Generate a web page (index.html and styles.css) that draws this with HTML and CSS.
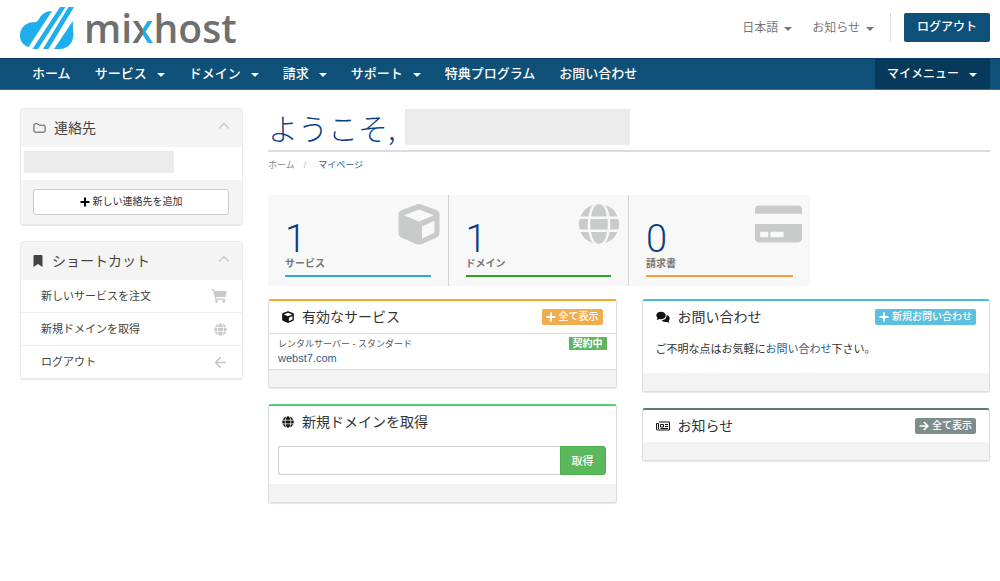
FILE: index.html
```
<!DOCTYPE html>
<html lang="ja">
<head>
<meta charset="utf-8">
<title>マイページ - mixhost</title>
<meta name="viewport" content="width=device-width, initial-scale=1">
<link rel="stylesheet" href="styles.css">
</head>
<body>
<svg class="sprite" aria-hidden="true">
  <symbol id="cube" viewBox="0 0 42 42">
    <path fill-rule="evenodd" d="M21 1Q22.500 1 24 1.700L38.500 7Q41.500 8.200 41.500 11.500V30Q41.500 33 38.800 34.400L24 41Q21 42 18 41L3.200 34.400Q.5 33 .5 30V11.500Q.5 8.200 3.500 7L18 1.700Q19.500 1 21 1ZM21 6.500L6 12.200L21 18.500L36 12.200ZM24 23.500V35.500L36.500 29.700V17.800Z"/>
  </symbol>
  <symbol id="globe" viewBox="0 0 42 42">
    <path d="M13 13.500Q15 1 21 1T29 13.500ZM12.500 16H29.500Q30.200 21 29.500 26.500H12.500Q11.800 21 12.500 16ZM13 29H29Q27 41 21 41T13 29ZM10.500 13.500H2.500Q6 4.500 15 2Q11.500 6 10.500 13.500ZM10 16Q9.400 21 10 26.500H1.800Q0 21 1.800 16ZM10.500 29Q11.500 36 15 40Q6 37.500 2.500 29ZM31.500 13.500H39.500Q36 4.500 27 2Q30.500 6 31.500 13.500ZM32 16Q32.600 21 32 26.500H40.200Q42 21 40.200 16ZM31.500 29Q30.500 36 27 40Q36 37.500 39.500 29Z"/>
  </symbol>
  <symbol id="card" viewBox="0 0 46 36">
    <path fill-rule="evenodd" d="M0 8V4Q0 0 4 0H42Q46 0 46 4V8ZM0 18H46V32Q46 36 42 36H4Q0 36 0 32ZM6 25.500Q5 25.500 5 26.500V30Q5 31 6 31H12Q13 31 13 30V26.500Q13 25.500 12 25.500ZM16 25.500Q15 25.500 15 26.500V30Q15 31 16 31H27Q28 31 28 30V26.500Q28 25.500 27 25.500Z"/>
  </symbol>
  <symbol id="folder" viewBox="0 0 14 12">
    <path fill="none" stroke="currentColor" stroke-width="1" d="M1 9.500V2.500Q1 1.500 2 1.500H5L6.500 3H12Q13 3 13 4V9.500Q13 10.500 12 10.500H2Q1 10.500 1 9.500Z"/>
  </symbol>
  <symbol id="bookmark" viewBox="0 0 10 12"><path d="M1.500 0H8.500Q9.500 0 9.500 1V12L5 9L.5 12V1Q.5 0 1.500 0Z"/></symbol>
  <symbol id="chevron" viewBox="0 0 12 12"><path fill="none" stroke="currentColor" stroke-width="1.500" d="M1 8.500L6 3.500L11 8.500"/></symbol>
  <symbol id="plus" viewBox="0 0 10 10"><path d="M4 .5H6V4H9.500V6H6V9.500H4V6H.5V4H4Z"/></symbol>
  <symbol id="right" viewBox="0 0 10 10"><path fill="none" stroke="currentColor" stroke-width="1.700" d="M.5 5H8.500M4.800 1L8.800 5L4.800 9"/></symbol>
  <symbol id="left" viewBox="0 0 14 14"><path fill="none" stroke="currentColor" stroke-width="1.700" d="M13 7H2M7 1.500L1.700 7L7 12.500"/></symbol>
  <symbol id="cart" viewBox="0 0 16 14"><path d="M.3.300H3L3.500 2H15.700L14.500 8H5L5.300 9.500H14V10.800H4.300L2.200 1.500H.3Z"/><circle cx="5.500" cy="12.400" r="1.400"/><circle cx="12.800" cy="12.400" r="1.400"/></symbol>
  <symbol id="comments" viewBox="0 0 14 12"><path d="M5 .8C7.700.8 9.700 2.500 9.700 4.500S7.700 8.200 5 8.200Q4 8.200 3.200 7.900Q2 8.800.5 8.800Q1.300 7.900 1.500 6.900Q.3 5.900.3 4.500C.3 2.500 2.300.8 5 .8ZM10.700 4.100C12.500 4.500 13.700 5.800 13.700 7.500Q13.700 8.900 12.600 9.900Q12.800 10.800 13.500 11.600Q12 11.600 10.900 10.900Q7.700 11.700 5.700 9.200Q10.700 8.800 10.700 4.100Z"/></symbol>
  <symbol id="news" viewBox="0 0 14 12"><path fill="none" stroke="currentColor" d="M3 2H13.500V10H1.500Q.5 10 .5 9V3.500H2.500V9M4.500 4.500H7.500V7H4.500ZM9 4.500H12M9 6.500H12M4.500 8.500H12"/></symbol>
</svg>

<header class="top">
  <a class="logo" href="#">
    <svg class="logo-mark" viewBox="20 6 55 43" aria-hidden="true">
      <path d="M28.500 47C22.500 45 20 40.500 20 35.500C20 28 26 22.500 33 22.300C36 22.200 37 22 39 19C42 13.500 46 11.300 52 11ZM60 7H65.500L38 49H32.500ZM68.500 7H74L48.500 49H43ZM72.800 21L73 30Q74 34 73 38C71.500 45 66 49 60 49H54Z"/>
    </svg>
    <span class="logo-word">mi<span class="logo-x">x</span>host</span>
  </a>
  <div class="top-tools">
    <button class="top-link" type="button">日本語<span class="caret"></span></button>
    <button class="top-link" type="button">お知らせ<span class="caret"></span></button>
    <a class="logout" href="#">ログアウト</a>
  </div>
</header>

<nav class="nav">
  <a href="#">ホーム</a>
  <a href="#">サービス<span class="caret"></span></a>
  <a href="#">ドメイン<span class="caret"></span></a>
  <a href="#">請求<span class="caret"></span></a>
  <a href="#">サポート<span class="caret"></span></a>
  <a href="#">特典プログラム</a>
  <a href="#">お問い合わせ</a>
  <a class="nav-account" href="#">マイメニュー<span class="caret"></span></a>
</nav>

<div class="page">
  <aside class="side">
    <section class="widget">
      <h2 class="widget-title"><svg class="icon-folder"><use href="#folder"/></svg>連絡先<svg class="chevron"><use href="#chevron"/></svg></h2>
      <div class="contact"><span class="mask mask-contact"></span></div>
      <div class="widget-foot">
        <a class="add" href="#"><svg class="icon-small"><use href="#plus"/></svg>新しい連絡先を追加</a>
      </div>
    </section>
    <section class="widget">
      <h2 class="widget-title"><svg class="icon-bookmark"><use href="#bookmark"/></svg>ショートカット<svg class="chevron"><use href="#chevron"/></svg></h2>
      <ul class="shortcuts">
        <li><a href="#">新しいサービスを注文<svg class="icon-cart"><use href="#cart"/></svg></a></li>
        <li><a href="#">新規ドメインを取得<svg><use href="#globe"/></svg></a></li>
        <li><a href="#">ログアウト<svg><use href="#left"/></svg></a></li>
      </ul>
    </section>
  </aside>

  <main class="main">
    <h1 class="welcome">ようこそ,<span class="mask mask-name"></span></h1>
    <ol class="crumbs"><li><a href="#">ホーム</a></li><li class="here">マイページ</li></ol>

    <div class="stats">
      <a class="stat" href="#">
        <svg class="stat-icon"><use href="#cube"/></svg>
        <span class="stat-num">1</span><span class="stat-label">サービス</span><span class="stat-bar blue"></span>
      </a>
      <a class="stat" href="#">
        <svg class="stat-icon"><use href="#globe"/></svg>
        <span class="stat-num">1</span><span class="stat-label">ドメイン</span><span class="stat-bar green"></span>
      </a>
      <a class="stat" href="#">
        <svg class="stat-icon wide"><use href="#card"/></svg>
        <span class="stat-num">0</span><span class="stat-label">請求書</span><span class="stat-bar orange"></span>
      </a>
    </div>

    <div class="panels">
      <div class="column">
        <section class="panel gold">
          <header class="panel-head ruled"><svg><use href="#cube"/></svg><h2>有効なサービス</h2><a class="tag tag-gold" href="#"><svg class="icon-small"><use href="#plus"/></svg>全て表示</a></header>
          <div class="service">
            <div class="service-text"><span>レンタルサーバー - スタンダード</span><a href="#">webst7.com</a></div>
            <span class="status">契約中</span>
          </div>
          <footer class="panel-foot ruled-top"></footer>
        </section>
        <section class="panel lime">
          <header class="panel-head"><svg><use href="#globe"/></svg><h2>新規ドメインを取得</h2></header>
          <form class="domain">
            <input type="text" aria-label="ドメイン名">
            <button type="button">取得</button>
          </form>
          <footer class="panel-foot"></footer>
        </section>
      </div>
      <div class="column">
        <section class="panel sky">
          <header class="panel-head"><svg class="wide"><use href="#comments"/></svg><h2>お問い合わせ</h2><a class="tag tag-sky" href="#"><svg class="icon-small"><use href="#plus"/></svg>新規お問い合わせ</a></header>
          <p class="message">ご不明な点はお気軽に<a href="#">お問い合わせ</a>下さい。</p>
          <footer class="panel-foot"></footer>
        </section>
        <section class="panel slate">
          <header class="panel-head"><svg class="wide"><use href="#news"/></svg><h2>お知らせ</h2><a class="tag tag-slate" href="#"><svg class="icon-small"><use href="#right"/></svg>全て表示</a></header>
          <footer class="panel-foot"></footer>
        </section>
      </div>
    </div>
  </main>
</div>
</body>
</html>
```
FILE: styles.css
```
* { box-sizing: border-box; }

body {
  margin: 0;
  background: #fff;
  color: #444;
  font-family: "Liberation Sans", "Noto Sans CJK JP", sans-serif;
  font-size: 11px;
  line-height: 16px;
}

a { color: #2c5d8c; text-decoration: none; }
svg { flex: none; fill: currentColor; }
h1, h2, p, ul, ol { margin: 0; padding: 0; font-weight: 400; }
ul, ol { list-style: none; }
button, input { font: inherit; }
.sprite { display: none; }

.caret {
  display: inline-block;
  margin-left: 10px;
  border: 4px solid transparent;
  border-top-color: currentColor;
  border-bottom: 0;
}

/* Header */
.top {
  display: flex;
  align-items: center;
  justify-content: space-between;
  height: 58px;
  padding: 0 10px 3px 20px;
}
.logo { display: flex; align-items: center; gap: 9px; color: #6f6f6f; }
.logo-mark { width: 55px; height: 43px; fill: #1eaeed; }
.logo-word { font: 600 39px/46px "Open Sans", sans-serif; }
.logo-x {
  background: linear-gradient(90deg, #6f6f6f 50%, #1eaeed 50%);
  background-clip: text;
  color: transparent;
}
.top-tools { display: flex; align-items: center; }
.top-link {
  margin-right: 20px;
  padding: 0;
  border: 0;
  background: none;
  color: #777;
  font-size: 12px;
}
.top-link .caret { margin-left: 6px; vertical-align: 1px; }
.logout {
  position: relative;
  margin-left: 10px;
  padding: 6px 13px 7px;
  border-radius: 2px;
  background: #0e5078;
  color: #fff;
  font-size: 12px;
  font-weight: 500;
}
.logout::before {
  content: "";
  position: absolute;
  top: 0;
  bottom: 0;
  left: -14px;
  border-left: 1px solid #ddd;
}

/* Navigation */
.nav {
  display: flex;
  gap: 24px;
  padding: 0 10px 0 32px;
  border-top: 1px solid #0a3d68;
  border-bottom: 1px solid #3a6d92;
  background: #0e5078;
}
.nav a {
  display: flex;
  align-items: center;
  height: 30px;
  color: #fff;
  font-size: 13px;
  font-weight: 500;
}
.nav .caret { margin-top: 2px; }
.nav .nav-account {
  margin-left: auto;
  padding: 0 13px 0 12px;
  background: #073a5a;
  font-size: 12px;
}

/* Page columns */
.page { display: flex; gap: 25px; padding: 18px 10px 24px 20px; }
.side { display: flex; flex: 0 0 223px; flex-direction: column; gap: 16px; }
.main { flex: 1; min-width: 0; }
.mask { display: block; background: #ebebeb; }

/* Sidebar */
.widget {
  overflow: hidden;
  border: 1px solid #ebebeb;
  border-radius: 3px;
  box-shadow: 0 1px 1px #e6e6e6;
}
.widget-title {
  display: flex;
  align-items: center;
  height: 38px;
  padding: 0 12px;
  background: #f4f4f4;
  font-size: 14px;
}
.icon-folder { width: 13px; height: 12px; margin-right: 8px; }
.icon-bookmark { width: 10px; height: 12px; margin-right: 9px; }
.chevron { width: 12px; height: 12px; margin: 0 0 4px auto; color: #ccc; }
.contact { padding: 4px 3px 7px; }
.mask-contact { width: 150px; height: 22px; }
.widget-foot { padding: 9px 13px 9px 12px; background: #f4f4f4; }
.add {
  display: flex;
  align-items: center;
  justify-content: center;
  gap: 3px;
  height: 26px;
  border: 1px solid #ccc;
  border-radius: 3px;
  background: #fff;
  color: #333;
  font-size: 10px;
}
.add svg { color: #000; }
.icon-small { width: 10px; height: 10px; }
.shortcuts li + li { border-top: 1px solid #eee; }
.shortcuts a {
  display: flex;
  align-items: center;
  justify-content: space-between;
  height: 32px;
  padding: 0 15px 0 20px;
  color: #444;
}
.shortcuts svg { width: 13px; height: 13px; color: #c8c8c8; }
.shortcuts .icon-cart { width: 16px; height: 14px; }

/* Title */
.welcome {
  display: flex;
  align-items: center;
  gap: 9px;
  height: 44px;
  padding-bottom: 4px;
  border-bottom: 2px solid #dcdcdc;
  color: #0b3f82;
  font-family: "Noto Sans CJK JP", sans-serif;
  font-size: 30px;
  font-weight: 300;
  line-height: 36px;
}
.mask-name { flex: 0 1 225px; height: 36px; }
.crumbs { display: flex; height: 43px; padding-top: 5px; font-size: 9px; }
.crumbs a { color: #888; }
.here { color: #2c5d8c; }
.here::before { content: "/"; margin: 0 12px 0 9px; color: #bbb; }

/* Counters */
.stats {
  display: grid;
  grid-template-columns: repeat(3, 1fr);
  width: 75%;
  background: #f8f8f8;
}
.stat {
  position: relative;
  display: flex;
  flex-direction: column;
  padding: 25px 17px 9px;
  color: #777;
}
.stat:not(:last-child) { border-right: 1px solid #d2d2d2; }
.stat-icon { position: absolute; top: 8px; right: 8px; width: 42px; height: 42px; color: #c9cbcb; }
.stat-icon.wide { width: 47px; }
.stat-num { color: #0b3f82; font: 300 38px/38px Roboto, sans-serif; }
.stat-label { font-size: 10px; font-weight: 700; line-height: 12px; }
.stat-bar { height: 2px; margin-top: 5px; }
.blue { background: #2aaed6; }
.green { background: #2da52a; }
.orange { background: #f59c3c; }

/* Panels */
.panels {
  display: grid;
  grid-template-columns: 1fr 1fr;
  align-items: start;
  gap: 25px;
  margin-top: 13px;
}
.column { display: flex; flex-direction: column; gap: 16px; min-width: 0; }
.panel {
  overflow: hidden;
  border: 1px solid #ddd;
  border-top-width: 2px;
  border-radius: 3px;
  box-shadow: 0 1px 1px #e6e6e6;
}
.gold { border-top-color: #f3a937; }
.lime { border-top-color: #57cc74; }
.sky { border-top-color: #45bddd; }
.slate { border-top-color: #647676; }
.panel-head {
  display: flex;
  align-items: center;
  gap: 8px;
  height: 32px;
  padding: 0 13px;
}
.panel-head svg { width: 12px; height: 12px; color: #111; }
.panel-head svg.wide { width: 14px; }
.panel-head h2 { flex: 1; color: #333; font-size: 14px; }
.panel-head.ruled { height: 33px; border-bottom: 1px solid #ddd; }
.panel-foot { height: 18px; background: #f3f3f3; }
.ruled-top { border-top: 1px solid #ddd; }
.tag {
  display: flex;
  align-items: center;
  gap: 3px;
  height: 16px;
  padding: 0 4px;
  border-radius: 2px;
  color: #fff;
  font-size: 10px;
  font-weight: 500;
}
.panel-head .tag svg { width: 10px; height: 10px; color: #fff; }
.tag-gold { background: #f0ad4e; }
.tag-sky { background: #5bc0de; }
.tag-slate { background: #7f8c8d; }

.service {
  display: flex;
  align-items: flex-start;
  justify-content: space-between;
  padding: 3px 9px 4px;
}
.service-text { display: flex; flex-direction: column; color: #555; font-size: 9px; line-height: 14px; }
.service-text a { font-size: 11px; }
.status {
  padding: 0 4px;
  background: #5cb85c;
  color: #fff;
  font-size: 10px;
  font-weight: 700;
  line-height: 13px;
}
.domain { display: flex; padding: 8px 10px 9px 9px; }
.domain input {
  flex: 1;
  min-width: 0;
  height: 29px;
  padding: 0 8px;
  border: 1px solid #ccc;
  border-right: 0;
  border-radius: 3px 0 0 3px;
}
.domain button {
  width: 46px;
  border: 1px solid #4cae4c;
  border-radius: 0 3px 3px 0;
  background: #5cb85c;
  color: #fff;
  font-weight: 500;
  padding: 0;
}
.message { padding: 8px 13px 16px; color: #333; }
```
